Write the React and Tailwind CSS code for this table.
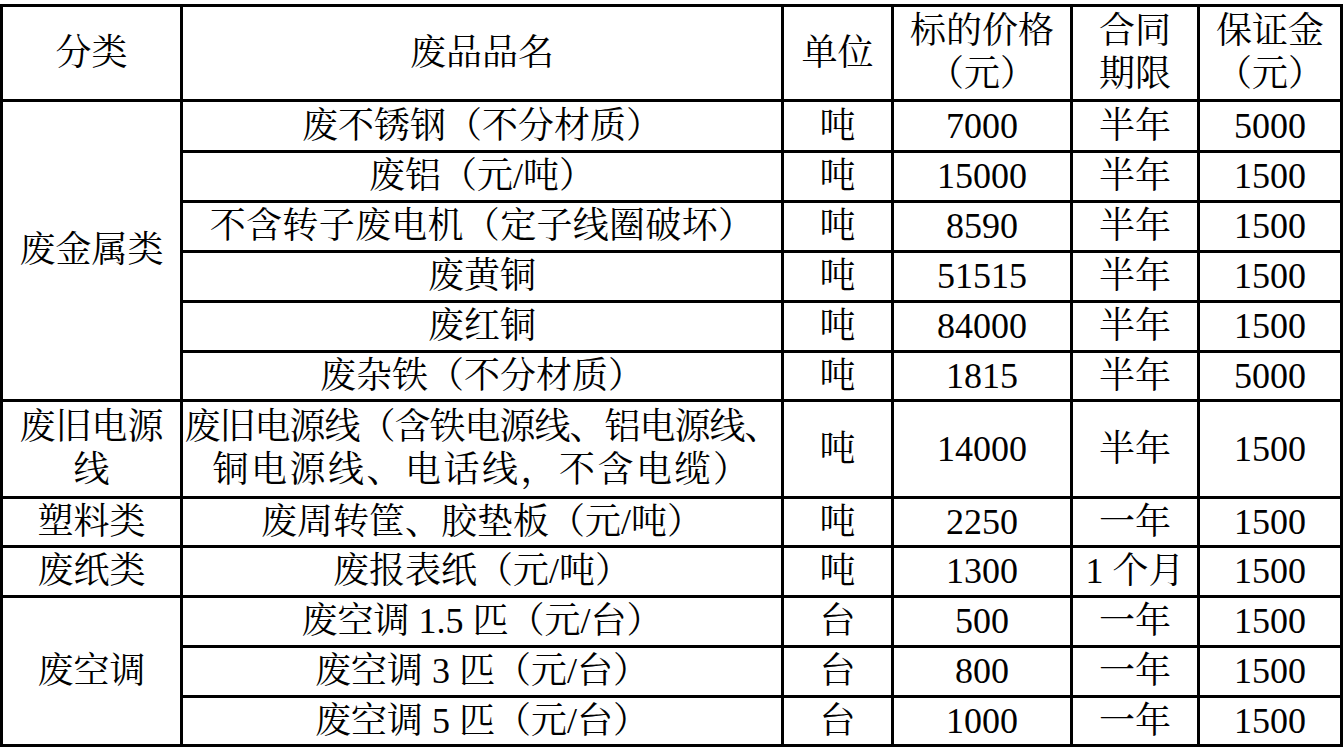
import React from 'react';

// 废品标的一览表
const header = [
    ['分类'],
    ['废品品名'],
    ['单位'],
    ['标的价格', '（元）'],
    ['合同', '期限'],
    ['保证金', '（元）'],
];

const groups = [
    {
        name: '废金属类',
        span: 'row-span-6',
        items: [
            ['废不锈钢（不分材质）', '吨', '7000', '半年', '5000'],
            ['废铝（元/吨）', '吨', '15000', '半年', '1500'],
            ['不含转子废电机（定子线圈破坏）', '吨', '8590', '半年', '1500', 'tracking-[0.3px]'],
            ['废黄铜', '吨', '51515', '半年', '1500'],
            ['废红铜', '吨', '84000', '半年', '1500'],
            ['废杂铁（不分材质）', '吨', '1815', '半年', '5000'],
        ],
    },
    {
        name: '废旧电源线',
        span: '',
        items: [['cable', '吨', '14000', '半年', '1500']],
    },
    { name: '塑料类', span: '', items: [['废周转筐、胶垫板（元/吨）', '吨', '2250', '一年', '1500']] },
    { name: '废纸类', span: '', items: [['废报表纸（元/吨）', '吨', '1300', '1 个月', '1500']] },
    {
        name: '废空调',
        span: 'row-span-3',
        items: [
            ['废空调 1.5 匹（元/台）', '台', '500', '一年', '1500'],
            ['废空调 3 匹（元/台）', '台', '800', '一年', '1500'],
            ['废空调 5 匹（元/台）', '台', '1000', '一年', '1500'],
        ],
    },
];

const Cell = ({ children, className = '' }) => (
    <div className={`bg-white flex items-center justify-center text-center leading-[43px] ${className}`}>
        {children}
    </div>
);

// two-line product name
const CableName = () => (
    <div>
        <div className="tracking-[-1px] whitespace-nowrap">废旧电源线（含铁电源线、铝电源线、</div>
        <div className="tracking-[2.5px] whitespace-nowrap">铜电源线、电话线，不含电缆）</div>
    </div>
);

const App = () => {
    return (
        <div className="w-[1344px] h-[748px] bg-white pt-[4px] text-black text-[36px] font-['Liberation_Serif','Noto_Serif_CJK_SC','Noto_Sans_CJK_SC',serif]">
            <div className="w-[1343px] grid grid-cols-[177px_598px_107px_176px_124px_140px] grid-rows-[92px_48px_47px_47px_47px_47px_46px_94px_46px_47px_47px_47px_46px] gap-[3px] p-[3px] bg-black">
                {header.map((lines, i) => (
                    <Cell key={i}>
                        <div>
                            {lines.map(l => (
                                <div key={l}>{l}</div>
                            ))}
                        </div>
                    </Cell>
                ))}

                {groups.map(g => (
                    <React.Fragment key={g.name}>
                        <Cell className={g.span}>{g.name}</Cell>
                        {g.items.map(([name, unit, price, term, deposit, extra]) => (
                            <React.Fragment key={name}>
                                <Cell className={extra || ''}>
                                    {name === 'cable' ? <CableName /> : <span className="whitespace-nowrap">{name}</span>}
                                </Cell>
                                <Cell>{unit}</Cell>
                                <Cell>{price}</Cell>
                                <Cell>{term}</Cell>
                                <Cell>{deposit}</Cell>
                            </React.Fragment>
                        ))}
                    </React.Fragment>
                ))}
            </div>
        </div>
    );
};

export default App;
